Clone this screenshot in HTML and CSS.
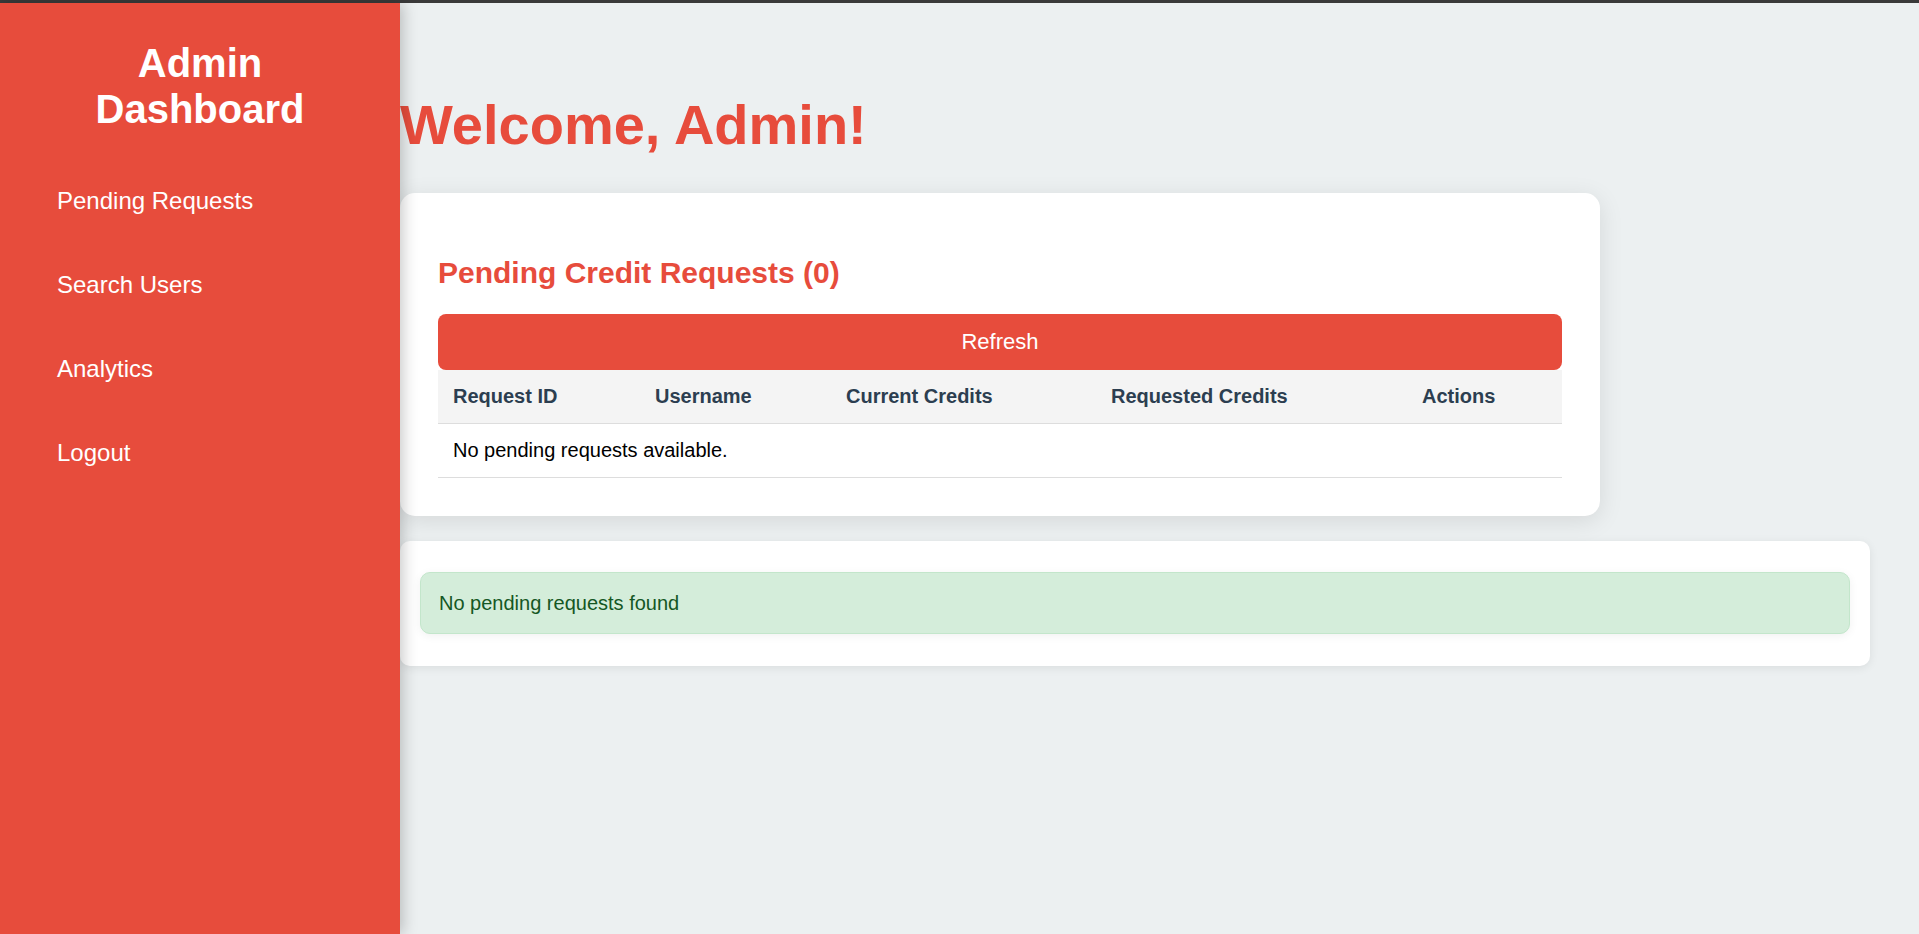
FILE: index.html
```html
<!DOCTYPE html>
<html lang="en">
<head>
<meta charset="utf-8">
<title>Admin Dashboard</title>
<link rel="stylesheet" href="styles.css">
</head>
<body>
<div class="topbar"></div>
<div class="layout">
  <aside class="sidebar">
    <h2 class="brand">Admin Dashboard</h2>
    <nav class="nav">
      <a class="nav-link" href="#">Pending Requests</a>
      <a class="nav-link" href="#">Search Users</a>
      <a class="nav-link" href="#">Analytics</a>
      <a class="nav-link" href="#">Logout</a>
    </nav>
  </aside>
  <main class="main">
    <h1 class="welcome">Welcome, Admin!</h1>
    <section class="card">
      <h2 class="card-title">Pending Credit Requests (0)</h2>
      <button class="refresh" type="button">Refresh</button>
      <table class="requests">
        <colgroup>
          <col class="c1"><col class="c2"><col class="c3"><col class="c4"><col class="c5">
        </colgroup>
        <thead>
          <tr>
            <th>Request ID</th>
            <th>Username</th>
            <th>Current Credits</th>
            <th>Requested Credits</th>
            <th>Actions</th>
          </tr>
        </thead>
        <tbody>
          <tr><td colspan="5">No pending requests available.</td></tr>
        </tbody>
      </table>
    </section>
    <section class="card-wide">
      <div class="alert">No pending requests found</div>
    </section>
  </main>
</div>
</body>
</html>
```

FILE: styles.css
```css
html, body {
  margin: 0;
  padding: 0;
}
body {
  font-family: "Liberation Sans", Arial, sans-serif;
  background: #ecf0f1;
  color: #000;
}
.topbar {
  height: 3px;
  background: #3a3a3a;
}
.layout {
  display: flex;
  min-height: calc(100vh - 3px);
}
.sidebar {
  width: 400px;
  flex-shrink: 0;
  background: #e74c3c;
  box-shadow: 3px 0 14px rgba(0, 0, 0, 0.22);
  position: relative;
  z-index: 2;
  padding: 37px 40px 0;
  box-sizing: border-box;
}
.brand {
  margin: 0;
  color: #fff;
  font-size: 40px;
  line-height: 46px;
  font-weight: bold;
  text-align: center;
}
.nav {
  margin-top: 27px;
}
.nav-link {
  display: block;
  color: #fff;
  text-decoration: none;
  font-size: 24px;
  line-height: 28px;
  padding: 28px 0 28px 17px;
}
.main {
  flex: 1;
  padding: 0 49px 0 0;
  min-width: 0;
}
.welcome {
  margin: 90px 0 36px;
  color: #e74c3c;
  font-size: 56px;
  line-height: 64px;
  font-weight: bold;
}
.card {
  max-width: 1200px;
  box-sizing: border-box;
  background: #fff;
  border-radius: 15px;
  padding: 38px;
  box-shadow: 0 5px 25px rgba(0, 0, 0, 0.1);
}
.card-title {
  margin: 24px 0 24px;
  color: #e74c3c;
  font-size: 30px;
  line-height: 35px;
  font-weight: bold;
}
.refresh {
  display: flex;
  align-items: center;
  justify-content: center;
  width: 100%;
  height: 56px;
  border: none;
  border-radius: 8px;
  background: #e74c3c;
  color: #fff;
  font-family: "Liberation Sans", Arial, sans-serif;
  font-size: 22px;
  padding: 0;
}
.requests {
  width: 100%;
  border-collapse: collapse;
  table-layout: fixed;
}
.c1 { width: 202px; }
.c2 { width: 191px; }
.c3 { width: 265px; }
.c4 { width: 311px; }
.c5 { width: 155px; }
.requests th {
  background: #f4f4f4;
  color: #2c3e50;
  font-size: 20px;
  line-height: 23px;
  font-weight: bold;
  text-align: left;
  padding: 15px;
  border-bottom: 1px solid #ddd;
}
.requests td {
  font-size: 20px;
  line-height: 23px;
  padding: 15px;
  border-bottom: 1px solid #ddd;
  color: #000;
}
.card-wide {
  margin-top: 25px;
  background: #fff;
  border-radius: 10px;
  padding: 31px 20px 32px;
  box-shadow: 0 2px 10px rgba(0, 0, 0, 0.08);
}
.alert {
  background: #d4edda;
  border: 1px solid #c3e6cb;
  color: #155724;
  border-radius: 10px;
  padding: 18px;
  font-size: 20px;
  line-height: 24px;
  box-shadow: 0 2px 10px rgba(0, 0, 0, 0.06);
}
```
